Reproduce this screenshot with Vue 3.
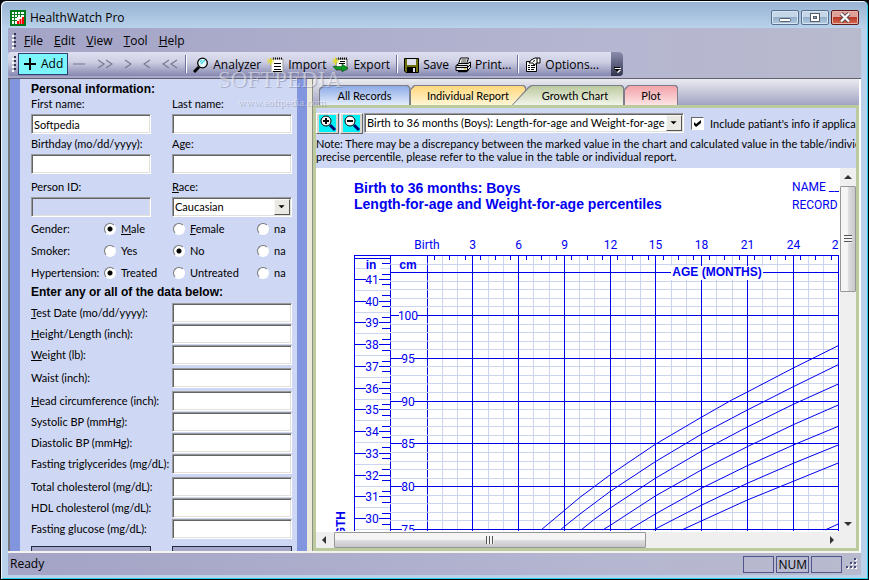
<script setup>
import { ref } from 'vue'

const menus = ['File', 'Edit', 'View', 'Tool', 'Help']

const firstName = ref('Softpedia')
const race = ref('Caucasian')
const chartKind = ref('boys')
const includeInfo = ref(true)

const answers = ref({ gender: 'Male', smoker: 'No', hypertension: 'Treated' })
const questions = [
  { key: 'gender', label: 'Gender:', options: ['Male', 'Female', 'na'], accel: true },
  { key: 'smoker', label: 'Smoker:', options: ['Yes', 'No', 'na'] },
  { key: 'hypertension', label: 'Hypertension:', options: ['Treated', 'Untreated', 'na'] },
]

const measureGroups = [
  [
    { id: 'test-date', text: 'Test Date (mo/dd/yyyy):', accel: true },
    { id: 'height', text: 'Height/Length (inch):', accel: true },
    { id: 'weight', text: 'Weight (lb):', accel: true },
  ],
  [{ id: 'waist', text: 'Waist (inch):' }],
  [
    { id: 'head', text: 'Head circumference (inch):', accel: true },
    { id: 'systolic', text: 'Systolic BP (mmHg):' },
    { id: 'diastolic', text: 'Diastolic BP (mmHg):' },
    { id: 'trig', text: 'Fasting triglycerides (mg/dL):' },
  ],
  [
    { id: 'total', text: 'Total cholesterol (mg/dL):' },
    { id: 'hdl', text: 'HDL cholesterol (mg/dL):' },
    { id: 'glucose', text: 'Fasting glucose (mg/dL):' },
  ],
]

// Growth chart geometry
const W = 523
const monthX = (m) => Math.floor(111 + m * 15.25) + 0.5
const cmY = (cm) => Math.round(147 + (100 - cm) * 8.56) + 0.5
const inchY = (inch) => Math.round(111 + (41 - inch) * 21.74) + 0.5
const range = (from, to, step = 1) => {
  const out = []
  for (let v = from; v <= to; v += step) out.push(v)
  return out
}
const minorMonths = range(1, 26).filter((m) => m % 3)
const majorMonths = range(3, 27, 3)
const halfMonths = range(0, 26).map((m) => m + 0.5)
const minorCm = range(75, 106).filter((c) => c % 5)
const majorCm = range(75, 105, 5)
const inches = range(30, 41)
const quarterInches = range(29.75, 41.75, 0.5)
const halfInches = range(29.5, 41.5)

const curves = [
  '225,362 264,329.3 294.3,306.7 339.3,276.3 385.3,249.3 415.7,232 431.3,224 477.3,200 523,177.3',
  '244,362 264,346 294.3,323.3 339.3,293.7 385.3,266.3 431.3,242 477.3,218.7 523,196.3',
  '265,362 278.3,351.3 294.3,340 339.3,310.3 385.3,283.3 431.3,259 477.3,236.3 523,215.7',
  '286.7,362 294.3,357.3 339.3,328 385.3,302 431.3,278.7 477.3,256.7 523,236.7',
  '312.7,362 339.3,346 385.3,320.3 431.3,297.7 477.3,277 523,258',
  '337.3,362 385.3,337.3 431.3,315.3 477.3,295.3 523,276.7',
  '365.7,362 385.3,353 431.3,332 477.3,313.3 523,294.7',
  '509,362 523,355.7',
]
</script>

<template>
  <div class="window">
    <header class="titlebar">
      <svg class="app-icon" width="16" height="16" viewBox="0 0 16 16" aria-hidden="true">
        <rect width="16" height="16" fill="#007a1c" />
        <rect x="2" y="2" width="12" height="12" fill="#fff" />
        <path d="M4.500 2v12M7.500 2v5M10.500 2v5M2 4.500h12M2 7.500h5M2 10.500h5" stroke="#007a1c" stroke-width="1" />
        <path d="M7 14v-3h2v3zM9.500 14V9h2v5zM12 14V7h2v7z" fill="#f00" />
      </svg>
      <h1>HealthWatch Pro</h1>
      <div class="win-buttons">
        <button type="button" aria-label="Minimize">
          <svg width="26" height="13" viewBox="0 0 26 13"><rect x="7.500" y="7.500" width="11" height="3" rx="1" fill="#fff" stroke="#555d68" /></svg>
        </button>
        <button type="button" aria-label="Maximize">
          <svg width="26" height="13" viewBox="0 0 26 13"><rect x="8.500" y="2.500" width="9" height="8" fill="#fff" stroke="#555d68" /><rect x="11.500" y="5.500" width="3" height="2" fill="#8fa9c6" stroke="#555d68" /></svg>
        </button>
        <button type="button" class="close" aria-label="Close">
          <svg width="26" height="13" viewBox="0 0 26 13"><path d="M9 2.500l8 8M17 2.500l-8 8" stroke="#5b4550" stroke-width="4" /><path d="M9 2.500l8 8M17 2.500l-8 8" stroke="#fff" stroke-width="2.200" /></svg>
        </button>
      </div>
    </header>

    <nav class="menubar">
      <span class="grip"></span>
      <button v-for="m in menus" :key="m" type="button"><u>{{ m[0] }}</u>{{ m.slice(1) }}</button>
    </nav>

    <div class="toolbar-row">
      <div class="toolbar">
        <span class="grip"></span>
        <button type="button" class="add">
          <svg width="14" height="14" viewBox="0 0 14 14"><path d="M1 7h12M7 1v12" stroke="#000" stroke-width="2" /></svg>
          <span>Add</span>
        </button>
        <div class="nav-buttons">
          <button type="button" aria-label="Delete"><svg width="14" height="12" viewBox="0 0 14 12"><path d="M1 6h12" /></svg></button>
          <button type="button" aria-label="Last"><svg width="16" height="12" viewBox="0 0 16 12"><path d="M1 2l6 4-6 4M9 2l6 4-6 4" /></svg></button>
          <button type="button" aria-label="Next"><svg width="8" height="12" viewBox="0 0 8 12"><path d="M1 2l6 4-6 4" /></svg></button>
          <button type="button" aria-label="Previous"><svg width="8" height="12" viewBox="0 0 8 12"><path d="M7 2L1 6l6 4" /></svg></button>
          <button type="button" aria-label="First"><svg width="16" height="12" viewBox="0 0 16 12"><path d="M7 2L1 6l6 4M15 2L9 6l6 4" /></svg></button>
        </div>
        <span class="sep"></span>
        <button type="button">
          <svg width="16" height="16" viewBox="0 0 16 16"><circle cx="9.500" cy="6" r="4.800" fill="#e6f8fb" stroke="#000" stroke-width="1.300" /><path d="M7 5l2-2M8 7l4-4" stroke="#3fd8e8" stroke-width="1.200" /><path d="M1 15l5-5" stroke="#000" stroke-width="3" /></svg>
          <span>Analyzer</span>
        </button>
        <button type="button">
          <svg width="17" height="16" viewBox="0 0 17 16"><path d="M4 2h12v13H4z" fill="#fff" stroke="#9a9a9a" /><path d="M6 1.500h10" stroke="#000" stroke-width="2" stroke-dasharray="1 1" /><path d="M7 6.500h7M7 9.500h7M7 12.500h7M6 14.500h9" stroke="#000" /><path d="M0 4h7M3.500 1v7M1 1.500l5 5M6 1.500l-5 5" stroke="#e3dc1b" /></svg>
          <span>Import</span>
        </button>
        <button type="button">
          <svg width="17" height="16" viewBox="0 0 17 16"><path d="M4 2h11v11H4z" fill="#fff" stroke="#555" /><path d="M6 1.500h9" stroke="#000" stroke-width="2" stroke-dasharray="1 1" /><path d="M8 4.500h5M7 6.500h6" stroke="#000" /><path d="M1 9.500h9V7l6 4-6 4v-2.500H4z" fill="#0a9b22" stroke="#044d10" stroke-width=".6" /><path d="M0 4h7M3.500 0v8M1 1.500l5 5M6 1.500l-5 5" stroke="#e3dc1b" /></svg>
          <span>Export</span>
        </button>
        <span class="sep"></span>
        <button type="button">
          <svg width="15" height="15" viewBox="0 0 15 15"><path d="M.5.5h14v14H2l-1.500-1.500z" fill="#6f7010" stroke="#000" /><rect x="3" y="1" width="9" height="6" fill="#dfe0ee" /><rect x="3" y="9" width="9" height="6" fill="#000" /><rect x="9" y="10" width="2" height="4" fill="#dfe0ee" /></svg>
          <span>Save</span>
        </button>
        <button type="button">
          <svg width="16" height="16" viewBox="0 0 16 16"><path d="M5.500 1h8l-2 6h-8z" fill="#fff" stroke="#000" /><path d="M6.500 3h5M6 5h5" stroke="#000" stroke-width=".8" /><path d="M1 8.500l3-2h9l2.500-1.500v5.500l-3 3H1z" fill="#e8e8e8" stroke="#000" /><path d="M1 10.500h11.500l3-3M12.500 13V8.500H2" fill="none" stroke="#000" /><path d="M3 14.500h8.500l2-2" fill="none" stroke="#000" stroke-width="1.500" /><path d="M9 11.800h2" stroke="#d8c800" /></svg>
          <span>Print...</span>
        </button>
        <span class="sep"></span>
        <button type="button">
          <svg width="16" height="16" viewBox="0 0 16 16"><path d="M1.500 4.500h10v10h-10z" fill="#fff" stroke="#000" /><path d="M3 8.500h2M6 8.500h4M3 10.500h2M6 10.500h4M3 12.500h2M6 12.500h3" stroke="#000" /><path d="M4 6l2-3 4-2h5v5h-3L9 8 8 6z" fill="#fff" stroke="#000" /><path d="M8 4.500l2-1M12 1v5" stroke="#000" /></svg>
          <span>Options...</span>
        </button>
        <button type="button" class="overflow" aria-label="Toolbar options">
          <svg width="7" height="7" viewBox="0 0 7 7"><path d="M1 2h6v1H1zM1 4h6L4 7z" fill="#fff" /><path d="M0 1h6v1H0zM0 3h6L3 6z" fill="#000" /></svg>
        </button>
      </div>
    </div>

    <main class="workspace">
      <div class="side">
        <form class="patient" @submit.prevent>
          <h2>Personal information:</h2>
          <div class="fields">
            <div class="field"><label for="first">First name:</label><input id="first" v-model="firstName" type="text" autofocus /></div>
            <div class="field"><label for="last">Last name:</label><input id="last" type="text" /></div>
            <div class="field"><label for="birthday">Birthday (mo/dd/yyyy):</label><input id="birthday" type="text" /></div>
            <div class="field"><label for="age">Age:</label><input id="age" type="text" /></div>
            <div class="field spaced"><label for="pid">Person ID:</label><input id="pid" type="text" disabled /></div>
            <div class="field spaced">
              <label for="race"><u>R</u>ace:</label>
              <span class="combo">
                <select id="race" v-model="race"><option>Caucasian</option><option>Other</option></select>
                <svg width="16" height="16" viewBox="0 0 16 16"><path d="M4 6h7L7.500 9.500z" /></svg>
              </span>
            </div>
          </div>

          <div v-for="q in questions" :key="q.key" class="question" role="radiogroup" :aria-labelledby="q.key">
            <span :id="q.key">{{ q.label }}</span>
            <label v-for="o in q.options" :key="o">
              <input v-model="answers[q.key]" type="radio" :name="q.key" :value="o" />
              <span v-if="q.accel && o !== 'na'"><u>{{ o[0] }}</u>{{ o.slice(1) }}</span>
              <span v-else>{{ o }}</span>
            </label>
          </div>

          <h2>Enter any or all of the data below:</h2>
          <div class="measures">
            <div v-for="(group, i) in measureGroups" :key="i">
              <div v-for="f in group" :key="f.id" class="measure">
                <label :for="f.id"><u v-if="f.accel">{{ f.text[0] }}</u>{{ f.accel ? f.text.slice(1) : f.text }}</label>
                <input :id="f.id" type="text" />
              </div>
            </div>
          </div>
          <div class="actions">
            <button type="button" aria-label="Save record"></button>
            <button type="button" aria-label="Cancel"></button>
          </div>
        </form>
      </div>

      <section class="content">
        <div class="tabs">
          <button type="button" class="tab blue">All Records</button>
          <button type="button" class="tab amber">Individual Report</button>
          <button type="button" class="tab green">Growth Chart</button>
          <button type="button" class="tab pink">Plot</button>
        </div>
        <div class="panel">
          <div class="controls">
            <button type="button" class="zoom" aria-label="Zoom in">
              <svg width="19" height="19" viewBox="0 0 19 19"><rect x="1" y="1" width="17" height="17" fill="#00f0f5" /><circle cx="8" cy="7" r="5" fill="#fff" stroke="#000" /><path d="M5 7h6M8 4v6" stroke="#000" stroke-width="2" /><path d="M12 11l5 5" stroke="#000070" stroke-width="3" /></svg>
            </button>
            <button type="button" class="zoom" aria-label="Zoom out">
              <svg width="19" height="19" viewBox="0 0 19 19"><rect x="1" y="1" width="17" height="17" fill="#00f0f5" /><circle cx="8" cy="7" r="5" fill="#fff" stroke="#000" /><path d="M5 7h6" stroke="#000" stroke-width="2" /><path d="M12 11l5 5" stroke="#000070" stroke-width="3" /></svg>
            </button>
            <span class="combo wide">
              <select v-model="chartKind" aria-label="Chart">
                <option value="boys">Birth to 36 months (Boys): Length-for-age and Weight-for-age percentiles</option>
                <option value="girls">Birth to 36 months (Girls): Length-for-age and Weight-for-age percentiles</option>
              </select>
              <svg width="16" height="16" viewBox="0 0 16 16"><path d="M4 6h7L7.500 9.500z" /></svg>
            </span>
            <label class="include"><input v-model="includeInfo" type="checkbox" /><span>Include patiant's info if applicable</span></label>
          </div>
          <p class="note">
            Note: There may be a discrepancy between the marked value in the chart and calculated value in the table/individual report. For<br />
            precise percentile, please refer to the value in the table or individual report.
          </p>

          <div class="viewer">
            <div class="canvas">
              <svg class="chart" width="523" height="363" viewBox="0 0 523 363" role="img" aria-label="Growth chart">
                <g class="light">
                  <path v-for="m in minorMonths" :key="'m' + m" :d="`M${monthX(m)} 88V363`" />
                  <path v-for="c in minorCm" :key="'c' + c" :d="`M75 ${cmY(c)}H${W}`" />
                  <path v-for="h in halfInches" :key="'h' + h" :d="`M39 ${inchY(h)}H74`" />
                </g>
                <g class="line">
                  <path :d="`M38 87.500H${W}M38.500 87V363M38 90.500H74`" />
                  <path d="M74.500 88V363M111.500 88V363" stroke-dasharray="7.560 1" />
                  <path v-for="m in majorMonths" :key="'M' + m" :d="`M${Math.min(monthX(m), 522.5)} 88V363`" />
                  <path v-for="m in halfMonths" :key="'t' + m" :d="`M${monthX(m)} 88v4`" />
                  <path v-for="c in majorCm" :key="'C' + c" :d="`M74 ${cmY(c)}H${W}`" />
                  <path v-for="n in inches" :key="'i' + n" :d="`M39 ${inchY(n)}H74`" />
                  <path v-for="n in quarterInches" :key="'q' + n" :d="`M66 ${inchY(n)}h8`" />
                </g>
                <g class="curves">
                  <polyline v-for="(c, i) in curves" :key="i" :points="c" />
                </g>
                <g class="mask">
                  <rect x="355" y="98" width="92" height="14" />
                  <rect x="50" y="91" width="14" height="14" />
                  <rect v-for="n in inches" :key="'b' + n" x="50" :y="inchY(n) - 5" width="13" height="10" />
                  <rect v-for="c in majorCm.slice(0, 6)" :key="'k' + c" :x="c === 100 ? 83 : 86" :y="cmY(c) - 5" :width="c === 100 ? 18 : 12" height="10" />
                </g>
                <g class="num">
                  <text v-for="n in inches" :key="'n' + n" x="56" :y="inchY(n) + 4">{{ n }}</text>
                  <text v-for="c in majorCm.slice(0, 6)" :key="'v' + c" x="92" :y="cmY(c) + 4">{{ c }}</text>
                  <text x="111" y="81">Birth</text>
                  <text v-for="m in majorMonths" :key="'x' + m" :x="monthX(m)" y="81">{{ m }}</text>
                </g>
                <g class="strong">
                  <text x="55" y="101" text-anchor="middle">in</text>
                  <text x="92" y="101" text-anchor="middle">cm</text>
                  <text x="401" y="108" text-anchor="middle">AGE (MONTHS)</text>
                  <text transform="translate(29 343) rotate(-90)" text-anchor="end">LENGTH</text>
                </g>
                <g class="title">
                  <text x="38" y="25">Birth to 36 months: Boys</text>
                  <text x="38" y="41">Length-for-age and Weight-for-age percentiles</text>
                </g>
                <g class="ident">
                  <text x="476" y="23">NAME ______________</text>
                  <text x="476" y="41">RECORD # __________</text>
                </g>
              </svg>
            </div>
            <div class="scroll vertical">
              <button type="button" aria-label="Scroll up"><svg width="16" height="16" viewBox="0 0 16 16"><path d="M4 11l4-4 4 4z" /></svg></button>
              <div class="track"><div class="thumb"><i></i></div></div>
              <button type="button" aria-label="Scroll down"><svg width="16" height="16" viewBox="0 0 16 16"><path d="M4 6l4 4 4-4z" /></svg></button>
            </div>
            <div class="scroll horizontal">
              <button type="button" aria-label="Scroll left"><svg width="18" height="16" viewBox="0 0 18 16"><path d="M10 4L6 8l4 4z" /></svg></button>
              <div class="track"><div class="thumb"><i></i></div></div>
              <button type="button" aria-label="Scroll right"><svg width="18" height="16" viewBox="0 0 18 16"><path d="M8 4l4 4-4 4z" /></svg></button>
            </div>
          </div>
        </div>
      </section>
    </main>

    <footer class="status">
      <span class="ready">Ready</span>
      <span class="cell"></span>
      <span class="cell">NUM</span>
      <span class="cell"></span>
      <svg width="12" height="12" viewBox="0 0 12 12" aria-hidden="true"><path d="M9 1h2v2H9zM5 5h2v2H5zM9 5h2v2H9zM1 9h2v2H1zM5 9h2v2H5zM9 9h2v2H9z" fill="#fff" /><path d="M8 0h2v2H8zM4 4h2v2H4zM8 4h2v2H8zM0 8h2v2H0zM4 8h2v2H4zM8 8h2v2H8z" fill="#4a4d78" /></svg>
    </footer>

    <div class="watermark" aria-hidden="true">
      <span>SOFTPEDIA</span>
      <small>www.softpedia.com</small>
    </div>
  </div>
</template>

<style>
body {
  background: #05060c;
}
</style>

<style scoped>
* {
  box-sizing: border-box;
}
.window {
  position: relative;
  display: flex;
  flex-direction: column;
  height: 100vh;
  padding: 0 7px 4px;
  overflow: hidden;
  border: 1px solid #000;
  border-radius: 6px 6px 0 0;
  background: linear-gradient(#97b3d2, #b9d1ea 27px, #b9d1ea);
  box-shadow: inset 1px 1px #f2f7fc, inset -1px -1px #29cfe8;
  font: 11px/14px Lato, "Liberation Sans", sans-serif;
  color: #000;
}
button,
input,
select {
  margin: 0;
  font: inherit;
  color: inherit;
}
button {
  padding: 0;
  border: 0;
  background: none;
}
h1,
h2,
p {
  margin: 0;
}
svg {
  display: block;
}

/* Title bar */
.titlebar {
  display: flex;
  flex: none;
  align-items: center;
  gap: 4px;
  height: 27px;
  padding: 6px 2px 0;
  font-family: "Open Sans", sans-serif;
}
.titlebar h1 {
  flex: 1;
  font-size: 12px;
  font-weight: 400;
}
.win-buttons {
  display: flex;
  gap: 2px;
}
.win-buttons button {
  border: 1px solid #56708f;
  border-radius: 2px;
  background: linear-gradient(#c5d6e8 45%, #94afcb 50%, #b4cce2);
  box-shadow: inset 0 0 0 1px #d8e6f3;
}
.win-buttons .close {
  border-color: #5e1a1c;
  background: linear-gradient(#dfa095 45%, #b93a2a 50%, #d4694f);
  box-shadow: inset 0 0 0 1px #e6b3a8;
}

/* Menu bar and toolbar */
.menubar,
.toolbar-row {
  display: flex;
  flex: none;
  background: linear-gradient(90deg, #a3a4c6, #b5b6d0 70%, #b8bace);
  font-family: "Open Sans", sans-serif;
  font-size: 12px;
}
.menubar {
  align-items: center;
  gap: 11px;
  height: 24px;
  padding: 2px 0 0 4px;
}
.grip {
  width: 4px;
  height: 16px;
  background: conic-gradient(#33364f 25%, transparent 0 50%, #fff 0 75%, transparent 0) 0 0 / 4px 4px;
}
.menubar .grip {
  margin-right: -3px;
}
.toolbar-row {
  height: 26px;
}
.toolbar {
  display: flex;
  align-items: center;
  height: 24px;
  padding-left: 4px;
  border-radius: 3px;
  background: linear-gradient(#dedff0, #cfd0e4 40%, #8587b0);
}
.toolbar button {
  display: flex;
  align-items: center;
  gap: 4px;
  padding: 2px 3px 0;
}
.toolbar .add {
  height: 22px;
  margin-left: 2px;
  padding: 0 4px;
  border: 1px solid #2d3f73;
  background: #7df5fd;
}
.toolbar .nav-buttons {
  display: flex;
  align-items: center;
  gap: 11px;
  padding: 0 4px;
}
.toolbar .nav-buttons button {
  padding: 0;
}
.nav-buttons path {
  fill: none;
  stroke: #77798f;
  stroke-width: 1.2;
}
.sep {
  width: 2px;
  height: 18px;
  margin: 0 3px;
  border-left: 1px solid #6c6f99;
  background: #fff;
}
.toolbar .overflow {
  align-items: flex-end;
  justify-content: center;
  width: 12px;
  height: 24px;
  margin-left: 9px;
  padding: 0 0 3px;
  border-radius: 0 4px 4px 0;
  background: linear-gradient(#8b8dae, #33344f);
}

/* Work area */
.workspace {
  display: flex;
  flex: 1;
  min-height: 0;
  border-top: 1px solid #5f6170;
  border-bottom: 2px solid #f4f3ee;
}
.side {
  flex: none;
  width: 299px;
  padding: 0 10px;
  overflow: hidden;
  border-left: 2px solid #77787d;
  background: #8295df;
  white-space: nowrap;
}
.patient {
  height: 100%;
  padding: 2px 5px 0 11px;
  background: #ced7f3;
}
h2 {
  font-family: "Liberation Sans", sans-serif;
  font-size: 12px;
  font-weight: 700;
  line-height: 16px;
}
.fields {
  display: grid;
  grid-template-columns: 120px 120px;
  gap: 3px 21px;
  justify-content: start;
  padding-bottom: 1px;
}
.field {
  display: grid;
  gap: 3px;
}
.spaced {
  margin-top: 3px;
}
input[type="text"],
.combo {
  width: 100%;
  height: 20px;
  padding: 0 2px;
  border: 1px solid;
  border-color: #9a9a9a #fff #fff #9a9a9a;
  border-radius: 0;
  outline: 0;
  background: #fff;
  box-shadow: inset 1px 1px #636363, inset -1px -1px #e3e0dc;
}
input[type="text"]:disabled {
  background: #ced7f3;
}
.combo {
  display: grid;
  grid-template-columns: 1fr 16px;
  align-items: center;
  padding: 1px;
}
.combo select {
  grid-area: 1 / 1 / 2 / 3;
  width: 100%;
  height: 16px;
  min-width: 0;
  padding: 0 17px 0 1px;
  border: 0;
  outline: 0;
  appearance: none;
  background: none;
}
.combo svg {
  grid-area: 1 / 2;
  pointer-events: none;
  border: 1px solid;
  border-color: #f8f8f8 #555 #555 #f8f8f8;
  background: #ebe9e4;
}
.question {
  display: grid;
  grid-template-columns: 73px 69px 84px auto;
  align-items: center;
  height: 22px;
}
.question label {
  display: flex;
  align-items: center;
  gap: 5px;
}
input[type="radio"] {
  width: 12px;
  height: 12px;
  border: 1px solid;
  border-color: #777 #fff #fff #777;
  border-radius: 50%;
  appearance: none;
  background: #fff;
}
input[type="radio"]:checked {
  background: radial-gradient(circle, #000 2px, #fff 3px);
}
.measures {
  display: grid;
  gap: 2px;
  padding-top: 3px;
}
.measure {
  display: grid;
  grid-template-columns: 141px 120px;
  align-items: center;
  height: 21px;
  padding-bottom: 1px;
}
.actions {
  display: grid;
  grid-template-columns: 120px 120px;
  gap: 21px;
  padding-top: 6px;
}
.actions button {
  height: 22px;
  border: 1px solid #262942;
  background: #a6a8cb;
}

/* Chart area */
.content {
  display: flex;
  flex: 1;
  flex-direction: column;
  min-width: 0;
  margin-left: 5px;
  border-left: 1px solid #8f9084;
  border-right: 2px solid #fff;
  box-shadow: -5px 0 #eceada;
}
.tabs {
  display: flex;
  align-items: flex-end;
  height: 26px;
  padding-left: 6px;
  background: linear-gradient(#ebebf0, #a2a4c4);
}
.tab {
  position: relative;
  z-index: 0;
  height: 20px;
  padding-top: 1px;
  background: #7d7f8a;
  clip-path: polygon(0 4px, 4px 0, calc(100% - 2px) 0, 100% 2px, 100% 100%, 0 100%);
}
.tab::before {
  content: "";
  position: absolute;
  inset: 1px 1px 0;
  z-index: -1;
  clip-path: polygon(0 4px, 4px 0, calc(100% - 2px) 0, 100% 2px, 100% 100%, 0 100%);
}
.blue {
  width: 91px;
}
.blue::before {
  background: linear-gradient(#8dabe6, #e3ecfc);
}
.amber {
  width: 116px;
}
.amber::before {
  background: linear-gradient(#ffd87c, #fff5d6);
}
.green {
  width: 112px;
  margin-left: -14px;
  padding-left: 14px;
  clip-path: polygon(0 100%, 16px 2px, 19px 0, calc(100% - 2px) 0, 100% 2px, 100% 100%);
}
.green::before {
  background: linear-gradient(#bcca9f, #f2f5ea);
  clip-path: polygon(0 100%, 16px 2px, 19px 0, calc(100% - 2px) 0, 100% 2px, 100% 100%);
}
.pink {
  width: 54px;
}
.pink::before {
  background: linear-gradient(#f3a2a8, #fde3e4);
}
.panel {
  display: flex;
  flex: 1;
  flex-direction: column;
  min-height: 0;
  border: 3px solid #bccb9e;
  background: #ced7f3;
}
.controls {
  display: flex;
  gap: 1px;
  padding-top: 5px;
  overflow: hidden;
  white-space: nowrap;
}
.zoom {
  flex: none;
  width: 23px;
  height: 21px;
  overflow: hidden;
  border: 1px solid;
  border-color: #fff #666 #666 #fff;
  background: #d9d6cf;
}
.zoom svg {
  margin: 0 auto;
}
.combo.wide {
  flex: none;
  width: 320px;
}
.include {
  display: flex;
  align-items: center;
  gap: 6px;
  margin-left: 6px;
}
input[type="checkbox"] {
  display: grid;
  flex: none;
  width: 13px;
  height: 13px;
  border: 1px solid;
  border-color: #666 #fff #fff #666;
  appearance: none;
  background: #fff;
}
input[type="checkbox"]:checked::before {
  content: "";
  width: 7px;
  height: 7px;
  margin: auto;
  background: #000;
  clip-path: polygon(0 30%, 30% 58%, 100% 0, 100% 42%, 30% 100%, 0 72%);
}
.note {
  height: 34px;
  padding-top: 3px;
  overflow: hidden;
  line-height: 13px;
  white-space: nowrap;
}
.viewer {
  display: grid;
  flex: 1;
  grid-template: 1fr 16px / 1fr 16px;
  min-height: 0;
  background: #efefef;
}
.canvas {
  min-width: 0;
  min-height: 0;
  overflow: hidden;
  background: #fff;
}
.chart {
  font-family: Roboto, "Liberation Sans", sans-serif;
  font-size: 12px;
}
.chart path,
.chart polyline {
  fill: none;
}
.light {
  stroke: #cbd5f0;
}
.line,
.curves {
  stroke: #0000f0;
}
.mask rect {
  fill: #fff;
}
.chart text {
  fill: #0000f0;
}
.num text {
  text-anchor: middle;
}
.strong,
.title {
  font-family: "Liberation Sans", sans-serif;
  font-weight: 700;
}
.title {
  font-size: 14px;
}
.scroll {
  display: flex;
}
.scroll .track {
  display: flex;
  flex: 1;
}
.thumb {
  display: flex;
  align-items: center;
  justify-content: center;
  border: 1px solid #979797;
  border-radius: 1px;
}
.vertical,
.vertical .track {
  flex-direction: column;
}
.vertical .track {
  padding-top: 2px;
}
.vertical .thumb {
  flex: 0 0 32%;
  background: linear-gradient(90deg, #f5f5f5 45%, #dcdcdf 55%, #c8c8cc);
}
.horizontal .thumb {
  flex: 0 0 64%;
  background: linear-gradient(#f5f5f5 45%, #dcdcdf 55%, #c8c8cc);
}
.thumb i {
  width: 8px;
  height: 8px;
}
.vertical i {
  background: repeating-linear-gradient(#555 0 1px, #f4f4f4 1px 3px);
}
.horizontal i {
  background: repeating-linear-gradient(90deg, #555 0 1px, #f4f4f4 1px 3px);
}
.scroll path {
  fill: #333;
}

/* Status bar */
.status {
  display: flex;
  flex: none;
  align-items: center;
  gap: 2px;
  height: 22px;
  padding: 0 3px 0 2px;
  background: linear-gradient(90deg, #a3a4c6, #b5b6d0 70%, #b8bace);
  font-family: "Open Sans", sans-serif;
  font-size: 12px;
}
.ready {
  flex: 1;
}
.cell {
  min-width: 31px;
  height: 17px;
  padding: 0 1px;
  border: 1px solid #50558c;
  line-height: 15px;
}
.status svg {
  margin-left: 2px;
}

/* Watermark over the page */
.watermark {
  position: absolute;
  top: 68px;
  left: 217px;
  display: grid;
  gap: 4px;
  font-family: "Liberation Serif", serif;
  color: rgb(255 255 255 / 45%);
  text-shadow: 1px 1px rgb(90 95 130 / 35%);
  pointer-events: none;
}
.watermark span {
  font-size: 23px;
  line-height: 22px;
}
.watermark small {
  padding-left: 20px;
  font-size: 11px;
}
</style>
